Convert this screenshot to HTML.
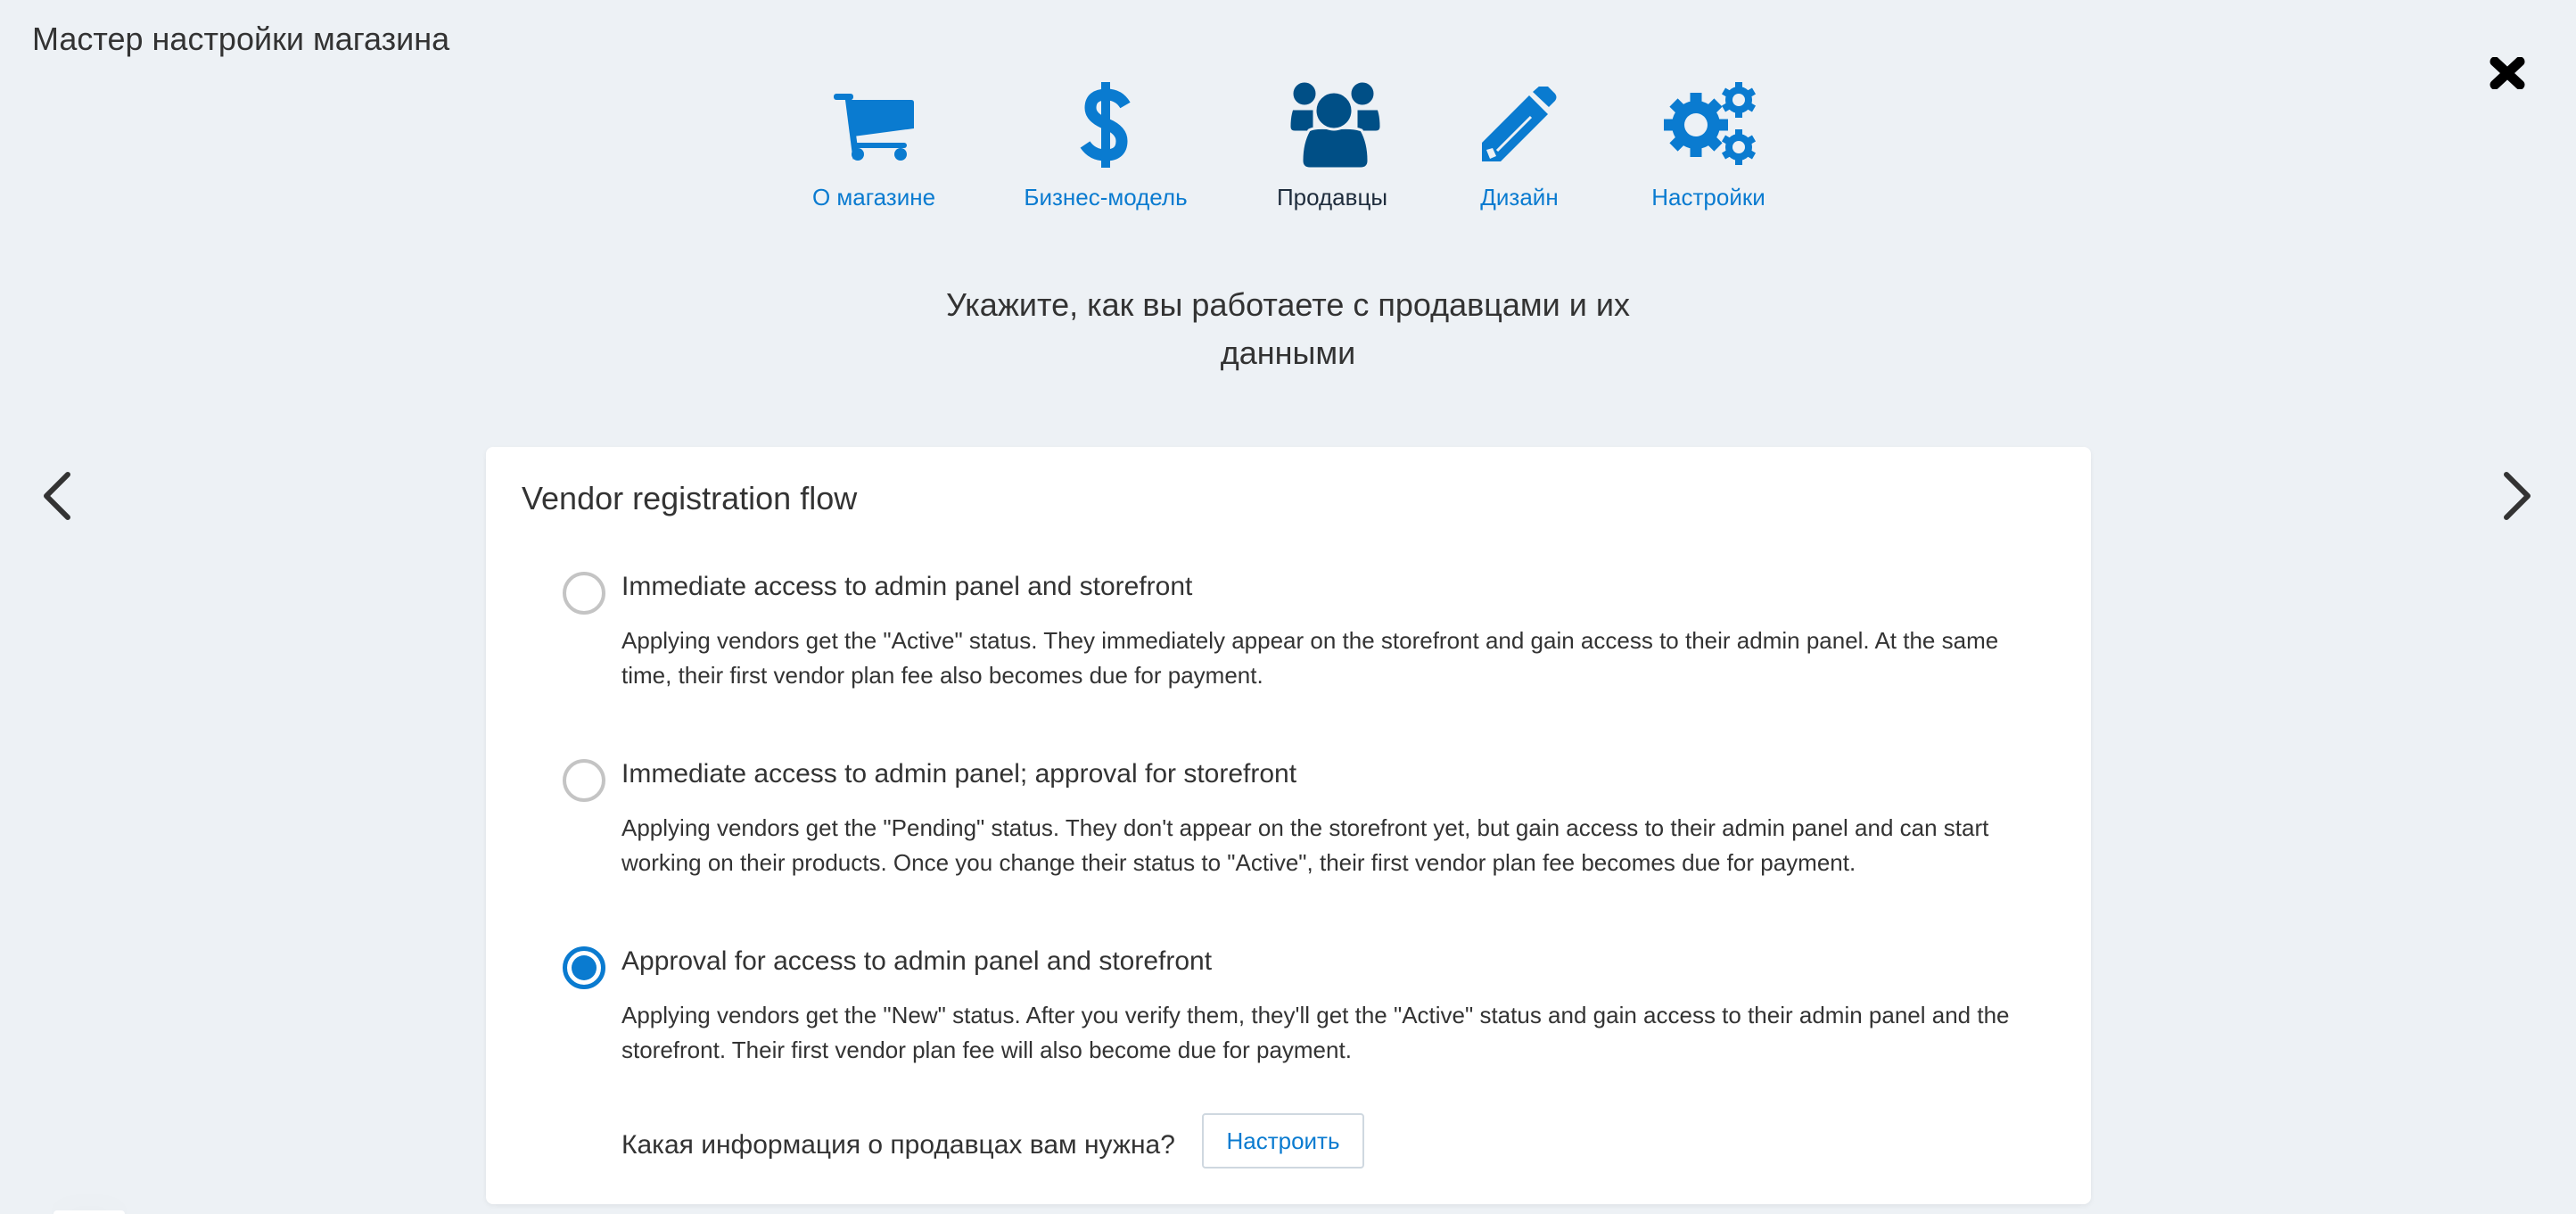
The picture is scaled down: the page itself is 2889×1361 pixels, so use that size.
<!DOCTYPE html>
<html><head><meta charset="utf-8"><style>
*{margin:0;padding:0;box-sizing:border-box}
html{width:2889px;height:1361px;overflow:hidden}
body{width:2889px;height:1361px;background:#edf1f5;font-family:"Liberation Sans","DejaVu Sans",sans-serif;color:#333;position:relative;overflow:hidden}
.a{position:absolute;white-space:nowrap}
.lbl{position:absolute;top:206px;font-size:26px;color:#0a7bd0;transform:translateX(-50%)}
.card{position:absolute;left:545px;top:501px;width:1800px;height:849px;background:#fff;border-radius:8px;box-shadow:0 2px 6px rgba(0,0,0,.06)}
.radio{position:absolute;left:631px;width:48px;height:48px;border-radius:50%;border:4px solid #c4c4c4;background:#fff}
.radio.on{border:5px solid #0a7bd0}
.radio.on::after{content:"";position:absolute;left:5px;top:5px;width:28px;height:28px;border-radius:50%;background:#0a7bd0}
.ot{position:absolute;left:697px;font-size:30px;color:#333;white-space:nowrap}
.d{position:absolute;left:697px;font-size:26px;line-height:39px;color:#333;white-space:nowrap}
</style></head><body>
<div class="a" style="left:36px;top:23px;font-size:36px;color:#333">Мастер настройки магазина</div>
<svg class="a" style="left:2791px;top:64px" width="42" height="36" viewBox="0 0 42 36"><path d="M7 5 L35 31 M35 5 L7 31" stroke="#000" stroke-width="11" stroke-linecap="round"/></svg>

<svg class="a" style="left:930px;top:100px" width="100" height="85" viewBox="930 100 100 85">
<rect x="935" y="105" width="22" height="7" rx="3" fill="#0a7bd0"/>
<path d="M951 108 L960 178" stroke="#0a7bd0" stroke-width="7"/>
<path d="M953 112 L1022 112 Q1025 112 1025 115 L1025 144 L957 153 Z" fill="#0a7bd0"/>
<rect x="957" y="160" width="60" height="6" rx="3" fill="#0a7bd0"/>
<circle cx="962" cy="173" r="7" fill="#0a7bd0"/><circle cx="1010" cy="173" r="7" fill="#0a7bd0"/>
</svg>
<svg class="a" style="left:1205px;top:88px" width="70" height="104" viewBox="0 0 70 104">
<rect x="30" y="4" width="10" height="96" fill="#0a7bd0"/>
<path d="M57 30 Q50 18 36 18 Q18 18 18 33 Q18 44 36 51 Q53 58 53 70 Q53 86 35 86 Q20 86 12 74" fill="none" stroke="#0a7bd0" stroke-width="13"/>
</svg>
<svg class="a" style="left:1440px;top:86px" width="115" height="106" viewBox="1440 86 115 106">
<g fill="#004f86" stroke="#edf1f5" stroke-width="3">
<circle cx="1463" cy="105" r="14"/><circle cx="1528" cy="105" r="14"/>
<path d="M1449 122 Q1446 130 1446 142 Q1446 148 1452 148 L1474 148 L1474 122 Z"/>
<path d="M1546 122 Q1549 130 1549 142 Q1549 148 1543 148 L1521 148 L1521 122 Z"/>
<path d="M1468 146 Q1474 142 1496 144 Q1518 142 1527 146 Q1535 160 1535 180 Q1535 189 1526 189 L1469 189 Q1460 189 1460 180 Q1460 160 1468 146 Z"/>
<circle cx="1496" cy="124" r="21"/>
</g></svg>
<svg class="a" style="left:1660px;top:97px" width="88" height="88" viewBox="1660 97 88 88">
<path d="M1662 181 L1662 160 L1715 107 L1736 128 L1683 181 Z" fill="#0a7bd0"/>
<path d="M1719 103 L1727 96 Q1731 93 1735 96 L1744 105 Q1747 109 1744 113 L1737 120 Z" fill="#0a7bd0"/>
<path d="M1679 169 L1717 131" stroke="#edf1f5" stroke-width="3"/>
<path d="M1667 168 L1674 166 L1678 175 L1671 178 Z" fill="#edf1f5"/>
</svg>
<svg class="a" style="left:1860px;top:88px" width="116" height="100" viewBox="1860 88 116 100">
<g fill="#0a7bd0">
<circle cx="1902" cy="140" r="27"/>
<g stroke="#0a7bd0" stroke-width="13">
<path d="M1902 104 L1902 176 M1866 140 L1938 140 M1877 115 L1927 165 M1927 115 L1877 165"/>
</g>
<circle cx="1950" cy="112" r="15"/>
<circle cx="1950" cy="165" r="15"/>
<g stroke="#0a7bd0" stroke-width="8">
<path d="M1950 92 L1950 132 M1933 102 L1967 122 M1933 122 L1967 102"/>
<path d="M1950 145 L1950 185 M1933 155 L1967 175 M1933 175 L1967 155"/>
</g>
</g>
<circle cx="1902" cy="140" r="13" fill="#edf1f5"/>
<circle cx="1950" cy="112" r="7" fill="#edf1f5"/>
<circle cx="1950" cy="165" r="7" fill="#edf1f5"/>
</svg>

<div class="lbl" style="left:980px">О магазине</div>
<div class="lbl" style="left:1240px">Бизнес-модель</div>
<div class="lbl" style="left:1494px;color:#1f2d3d">Продавцы</div>
<div class="lbl" style="left:1704px">Дизайн</div>
<div class="lbl" style="left:1916px">Настройки</div>

<div class="a" style="left:0;width:2889px;top:315px;text-align:center;font-size:36px;line-height:54px;color:#333">Укажите, как вы работаете с продавцами и их<br>данными</div>

<svg class="a" style="left:44px;top:528px" width="40" height="56" viewBox="0 0 40 56"><path d="M32 4 L8 28 L32 52" fill="none" stroke="#333" stroke-width="6" stroke-linecap="round" stroke-linejoin="round"/></svg>
<svg class="a" style="left:2803px;top:528px" width="40" height="56" viewBox="0 0 40 56"><path d="M8 4 L32 28 L8 52" fill="none" stroke="#333" stroke-width="6" stroke-linecap="round" stroke-linejoin="round"/></svg>

<div class="card"></div>
<div class="a" style="left:585px;top:538px;font-size:36px;color:#333">Vendor registration flow</div>

<div class="radio" style="top:641px"></div>
<div class="ot" style="top:641px">Immediate access to admin panel and storefront</div>
<div class="d" style="top:699px">Applying vendors get the "Active" status. They immediately appear on the storefront and gain access to their admin panel. At the same<br>time, their first vendor plan fee also becomes due for payment.</div>

<div class="radio" style="top:851px"></div>
<div class="ot" style="top:851px">Immediate access to admin panel; approval for storefront</div>
<div class="d" style="top:909px">Applying vendors get the "Pending" status. They don't appear on the storefront yet, but gain access to their admin panel and can start<br>working on their products. Once you change their status to "Active", their first vendor plan fee becomes due for payment.</div>

<div class="radio on" style="top:1061px"></div>
<div class="ot" style="top:1061px">Approval for access to admin panel and storefront</div>
<div class="d" style="top:1119px">Applying vendors get the "New" status. After you verify them, they'll get the "Active" status and gain access to their admin panel and the<br>storefront. Their first vendor plan fee will also become due for payment.</div>

<div class="ot" style="top:1267px">Какая информация о продавцах вам нужна?</div>
<div class="a" style="left:1348px;top:1248px;width:182px;height:62px;border:2px solid #cfd8e0;border-radius:4px;background:#fff;color:#0a7bd0;font-size:26px;text-align:center;line-height:58px">Настроить</div>

<div class="a" style="left:60px;top:1357px;width:80px;height:4px;border-radius:40px 40px 0 0;background:#fff;box-shadow:0 0 30px rgba(0,0,0,.08)"></div>
</body></html>
